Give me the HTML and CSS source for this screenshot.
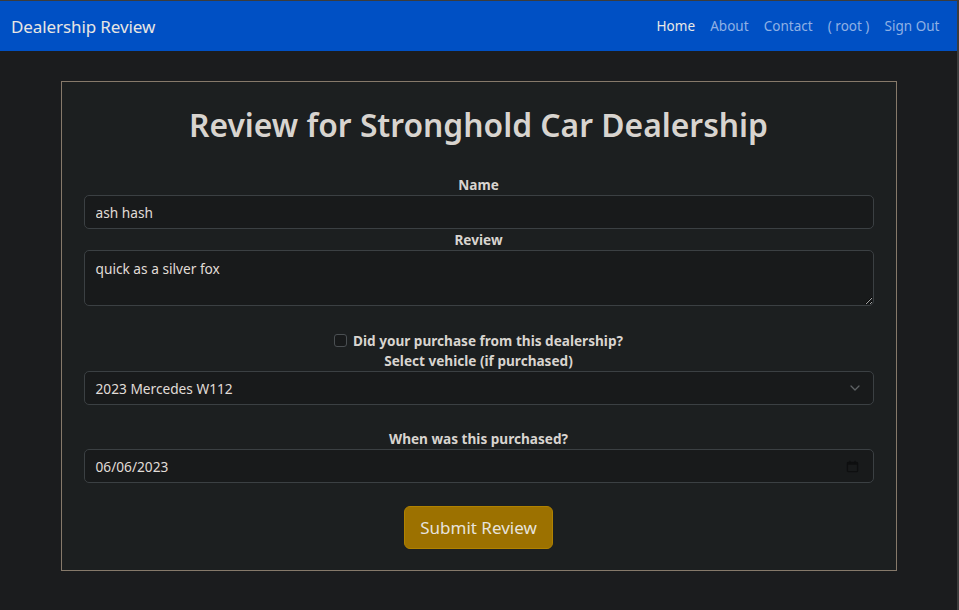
FILE: index.html
```html
<!DOCTYPE html>
<html lang="en">
<head>
<meta charset="utf-8">
<title>Dealership Review</title>
<link rel="stylesheet" href="styles.css">
</head>
<body>
<div class="frame">
  <nav class="navbar">
    <a class="brand" href="#">Dealership Review</a>
    <ul class="nav-links">
      <li><a class="active" href="#">Home</a></li>
      <li><a href="#">About</a></li>
      <li><a href="#">Contact</a></li>
      <li><a href="#">( root )</a></li>
      <li><a href="#">Sign Out</a></li>
    </ul>
  </nav>
  <main class="page">
    <section class="card">
      <h1 class="title">Review for Stronghold Car Dealership</h1>
      <form class="form">
        <label class="label" for="name">Name</label>
        <input class="control" id="name" type="text" value="ash hash">
        <label class="label" for="review">Review</label>
        <textarea class="control area" id="review">quick as a silver fox</textarea>
        <div class="check-row">
          <span class="checkbox"></span>
          <span class="label-inline">Did your purchase from this dealership?</span>
        </div>
        <label class="label" for="car">Select vehicle (if purchased)</label>
        <div class="control select" id="car">
          <span>2023 Mercedes W112</span>
          <svg class="chev" width="10" height="6" viewBox="0 0 10 6"><path d="M1 1l4 4 4-4" fill="none" stroke="#5f6365" stroke-width="1.3" stroke-linecap="round" stroke-linejoin="round"/></svg>
        </div>
        <label class="label gap-top" for="date">When was this purchased?</label>
        <div class="control date" id="date">
          <span>06/06/2023</span>
          <svg class="cal" width="13" height="13" viewBox="0 0 14 14"><rect x="1.5" y="2.5" width="11" height="10" rx="1" fill="none" stroke="#0e0f10" stroke-width="1.4"/><rect x="1.5" y="2.5" width="11" height="2.6" fill="#0e0f10"/><rect x="3.5" y="0.8" width="1.4" height="2.5" fill="#0e0f10"/><rect x="9.1" y="0.8" width="1.4" height="2.5" fill="#0e0f10"/></svg>
        </div>
        <div class="actions">
          <button class="btn" type="button">Submit Review</button>
        </div>
      </form>
    </section>
  </main>
</div>
</body>
</html>
```
FILE: styles.css
```css
* { box-sizing: border-box; }
html, body { margin: 0; padding: 0; }
body {
  background: #181a1b;
  color: #e8e6e3;
  font-family: "Noto Sans", "Open Sans", sans-serif;
  width: 959px;
  height: 610px;
  overflow: hidden;
}
.frame {
  height: 610px;
  border-top: 1px solid #3c3c3c;
  border-right: 2px solid #3c3c3c;
  background: #1b1c1e;
}
.navbar {
  height: 50px;
  background: #0050c4;
  display: flex;
  align-items: center;
  justify-content: space-between;
  padding: 0 10px 0 11px;
}
.brand {
  color: #e8e6e3;
  text-decoration: none;
  font-size: 17px;
  letter-spacing: -0.1px;
}
.nav-links {
  list-style: none;
  display: flex;
  margin: 0;
  padding: 0;
}
.nav-links a {
  display: block;
  padding: 0 7.6px;
  font-size: 13.5px;
  color: #8fb0e4;
  text-decoration: none;
}
.nav-links a.active { color: #ebe9e6; }
.page {
  padding: 30px 0 0;
  display: flex;
  justify-content: center;
}
.card {
  width: 836px;
  height: 490px;
  background: #1c1f20;
  border: 1px solid #86796a;
  padding: 0 22px;
}
.title {
  margin: 22px 0 0;
  text-align: center;
  font-size: 31.8px;
  font-weight: 600;
  line-height: 42px;
  color: #d8d4cf;
}
.form {
  display: flex;
  flex-direction: column;
  margin-top: 28px;
}
.label {
  display: block;
  text-align: center;
  font-size: 13.6px;
  font-weight: 700;
  line-height: 21px;
  color: #d8d4cf;
}
.gap-top { margin-top: 23px; }
.control {
  display: block;
  width: 100%;
  background: #181a1b;
  border: 1px solid #3b4043;
  border-radius: 5px;
  color: #e0ddd8;
  font-family: inherit;
  font-size: 13.7px;
  height: 34px;
  padding: 0 11px;
  outline: none;
}
.area {
  height: 56px;
  padding: 8px 11px;
  resize: vertical;
}
.check-row {
  margin-top: 24px;
  height: 20px;
  display: flex;
  justify-content: center;
  align-items: center;
  gap: 6px;
}
.checkbox {
  width: 13px;
  height: 13px;
  border: 1px solid #4a4f52;
  border-radius: 3px;
  background: #181a1b;
}
.label-inline {
  font-size: 13.6px;
  font-weight: 700;
  color: #d8d4cf;
}
.select, .date {
  display: flex;
  align-items: center;
  justify-content: space-between;
  padding-right: 14px;
}
.select { padding-right: 13px; }
.actions {
  display: flex;
  justify-content: center;
  margin-top: 23px;
}
.btn {
  background: #9c7100;
  border: 1px solid #b08200;
  border-radius: 6px;
  color: #e6e3de;
  font-family: inherit;
  font-size: 17px;
  height: 43px;
  padding: 0 15px;
}
```
